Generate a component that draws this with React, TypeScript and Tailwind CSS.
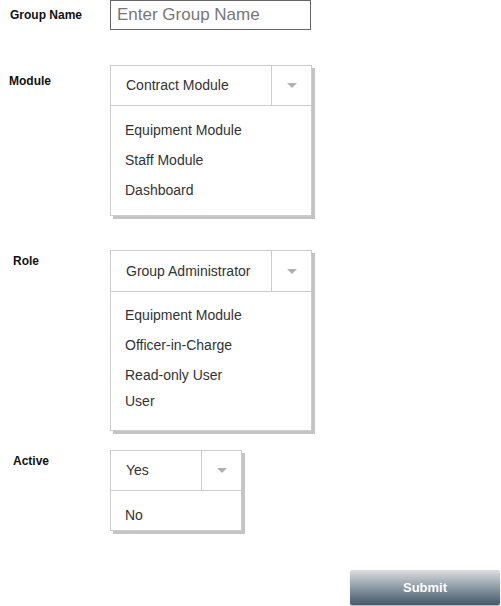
import React from "react";

const font = { fontFamily: '"Liberation Sans", Arial, sans-serif' };

function Caret() {
  return (
    <span className="block w-0 h-0 border-l-[5px] border-r-[5px] border-t-[5px] border-l-transparent border-r-transparent border-t-[#b0b0b0]" />
  );
}

function SelectBox({
  value,
  options,
  width,
  headerH,
  listClass,
}: {
  value: string;
  options: { label: string; cls?: string }[];
  width: string;
  headerH: string;
  listClass: string;
}) {
  return (
    <div className={`${width} border border-[#cccccc] bg-white shadow-[3px_3px_0_#c4c4c4]`}>
      <div className={`flex ${headerH} border-b border-[#cccccc]`}>
        <div className="flex-1 flex items-center pl-[15px] text-[14px] text-[#333]">{value}</div>
        <div className="w-[40px] border-l border-[#cccccc] flex items-center justify-center">
          <Caret />
        </div>
      </div>
      <ul className={listClass}>
        {options.map((o) => (
          <li key={o.label} className={`h-[30px] flex items-center pl-[14px] text-[14px] text-[#333] ${o.cls ?? ""}`}>
            {o.label}
          </li>
        ))}
      </ul>
    </div>
  );
}

export default function App() {
  return (
    <div className="w-[501px] h-[606px] bg-white relative" style={font}>
      {/* Group name */}
      <div className="flex items-center h-[30px]">
        <label className="w-[110px] pl-[10px] text-[12px] font-bold text-[#111]">Group Name</label>
        <input
          placeholder="Enter Group Name"
          className="w-[201px] h-[30px] border border-[#666] px-[6px] text-[17px] text-[#333] placeholder:text-[#777] outline-none"
        />
      </div>

      {/* Module */}
      <div className="flex mt-[35px]">
        <label className="w-[110px] pl-[9px] pt-[7px] text-[12px] font-bold text-[#111]">Module</label>
        <SelectBox
          value="Contract Module"
          width="w-[202px]"
          headerH="h-[40px]"
          listClass="pt-[9px] pb-[10px]"
          options={[{ label: "Equipment Module" }, { label: "Staff Module" }, { label: "Dashboard" }]}
        />
      </div>

      {/* Role */}
      <div className="flex mt-[34px]">
        <label className="w-[110px] pl-[13px] pt-[2px] text-[12px] font-bold text-[#111]">Role</label>
        <SelectBox
          value="Group Administrator"
          width="w-[202px]"
          headerH="h-[41px]"
          listClass="pt-[8px] pb-[14px]"
          options={[
            { label: "Equipment Module" },
            { label: "Officer-in-Charge" },
            { label: "Read-only User" },
            { label: "User", cls: "-mt-[4px]" },
          ]}
        />
      </div>

      {/* Active */}
      <div className="flex mt-[19px]">
        <label className="w-[110px] pl-[13px] pt-[2px] text-[12px] font-bold text-[#111]">Active</label>
        <SelectBox
          value="Yes"
          width="w-[132px]"
          headerH="h-[40px]"
          listClass="pt-[9px] pb-0"
          options={[{ label: "No" }]}
        />
      </div>

      {/* Submit */}
      <div className="flex justify-end mt-[39px] pr-[1px]">
        <button className="w-[150px] h-[35px] rounded-[2px] bg-gradient-to-b from-[#dcdfe1] to-[#455a6b] text-white text-[13px] font-bold shadow-[0_1px_1px_rgba(0,0,0,0.3)]">
          Submit
        </button>
      </div>
    </div>
  );
}
